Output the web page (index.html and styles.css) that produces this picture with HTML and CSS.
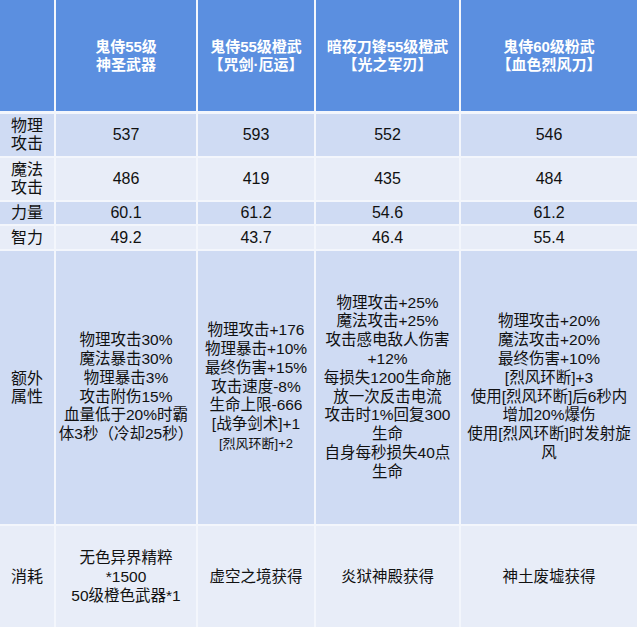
FILE: index.html
```html
<!DOCTYPE html>
<html lang="zh-CN">
<head>
<meta charset="utf-8">
<link rel="stylesheet" href="styles.css">
</head>
<body>
<div class="table">
  <div class="cell head"></div>
  <div class="cell head"><div>鬼侍55级<br>神圣武器</div></div>
  <div class="cell head"><div>鬼侍55级橙武<br>【咒剑·厄运】</div></div>
  <div class="cell head"><div>暗夜刀锋55级橙武<br>【光之军刃】</div></div>
  <div class="cell head"><div>鬼侍60级粉武<br>【血色烈风刀】</div></div>

  <div class="cell dark label"><div>物理<br>攻击</div></div>
  <div class="cell dark num">537</div>
  <div class="cell dark num">593</div>
  <div class="cell dark num">552</div>
  <div class="cell dark num">546</div>

  <div class="cell light label"><div>魔法<br>攻击</div></div>
  <div class="cell light num">486</div>
  <div class="cell light num">419</div>
  <div class="cell light num">435</div>
  <div class="cell light num">484</div>

  <div class="cell dark label">力量</div>
  <div class="cell dark num">60.1</div>
  <div class="cell dark num">61.2</div>
  <div class="cell dark num">54.6</div>
  <div class="cell dark num">61.2</div>

  <div class="cell light label">智力</div>
  <div class="cell light num">49.2</div>
  <div class="cell light num">43.7</div>
  <div class="cell light num">46.4</div>
  <div class="cell light num">55.4</div>

  <div class="cell dark label"><div>额外<br>属性</div></div>
  <div class="cell dark extra"><div>物理攻击30%<br>魔法暴击30%<br>物理暴击3%<br>攻击附伤15%<br>血量低于20%时霸<br>体3秒（冷却25秒）</div></div>
  <div class="cell dark extra"><div>物理攻击+176<br>物理暴击+10%<br>最终伤害+15%<br>攻击速度-8%<br>生命上限-666<br>[战争剑术]+1<br><span class="small">[烈风环断]+2</span></div></div>
  <div class="cell dark extra"><div>物理攻击+25%<br>魔法攻击+25%<br>攻击感电敌人伤害<br>+12%<br>每损失1200生命施<br>放一次反击电流<br>攻击时1%回复300<br>生命<br>自身每秒损失40点<br>生命</div></div>
  <div class="cell dark extra"><div>物理攻击+20%<br>魔法攻击+20%<br>最终伤害+10%<br>[烈风环断]+3<br>使用[烈风环断]后6秒内<br>增加20%爆伤<br>使用[烈风环断]时发射旋<br>风</div></div>

  <div class="cell light label">消耗</div>
  <div class="cell light cost"><div>无色异界精粹<br>*1500<br>50级橙色武器*1</div></div>
  <div class="cell light cost">虚空之境获得</div>
  <div class="cell light cost">炎狱神殿获得</div>
  <div class="cell light cost">神土废墟获得</div>
</div>
</body>
</html>
```
FILE: styles.css
```css
html, body {
  margin: 0;
  padding: 0;
  background: #ffffff;
}

body {
  width: 640px;
  height: 628px;
  overflow: hidden;
  font-family: "Liberation Sans", "Noto Sans CJK SC", sans-serif;
  color: #111111;
}

.table {
  display: grid;
  grid-template-columns: 54px 140px 116px 143px 176px;
  grid-template-rows: 112px 42px 42px 22px 23px 273px 101px;
  column-gap: 2px;
  row-gap: 2px;
  width: 637px;
  background: #f3f6fc;
}

.cell {
  display: flex;
  align-items: center;
  justify-content: center;
  text-align: center;
  white-space: nowrap;
}

.head {
  background: #5b8fe0;
  color: #ffffff;
  font-weight: bold;
  font-size: 15px;
  line-height: 18px;
  margin-bottom: 1px;
}

.dark {
  background: #cfdbf3;
}

.light {
  background: #e8edf8;
}

.label {
  font-size: 16px;
  line-height: 18px;
}

.num {
  font-size: 16px;
  line-height: 18px;
}

.extra {
  font-size: 15.5px;
  line-height: 18.8px;
}

.small {
  font-size: 13px;
}

.cost {
  font-size: 15.5px;
  line-height: 19px;
}
```
